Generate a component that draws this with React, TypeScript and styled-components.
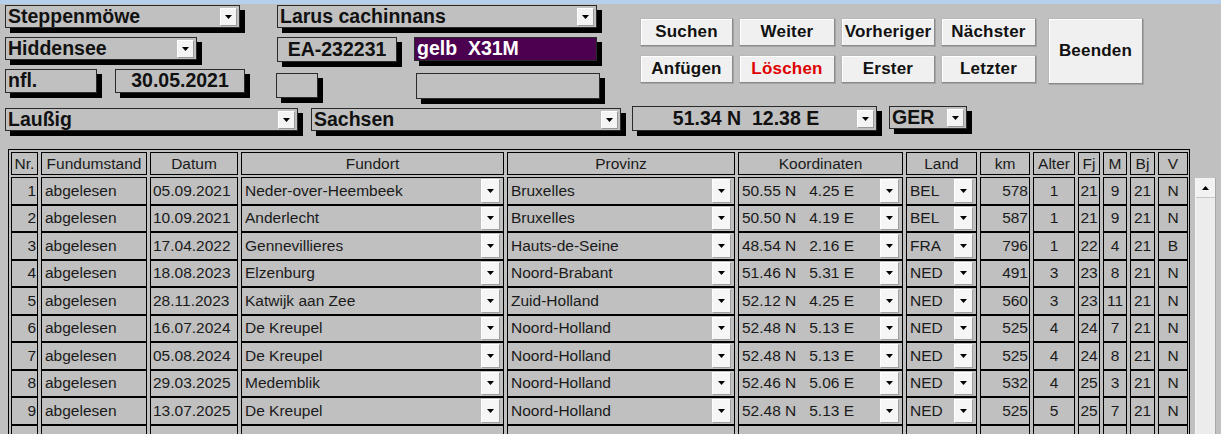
import React from "react";
import styled, { createGlobalStyle } from "styled-components";

const Global = createGlobalStyle`
  html, body { margin: 0; padding: 0; background: #c0c0c0; overflow: hidden; }
  body { font-family: "Liberation Sans", Arial, sans-serif; color: #111; }
  * { box-sizing: border-box; }
`;

const Window = styled.div`
  width: 1221px;
  height: 434px;
  background: #c0c0c0;
  overflow: hidden;
  display: flex;
  flex-direction: column;
`;

const TitleStrip = styled.div`
  flex: none;
  height: 4px;
  background: #b4d0ec;
`;

const Header = styled.div`
  display: flex;
  flex-direction: column;
  padding: 1px 0 0 5px;
`;

const TopSection = styled.div`
  display: flex;
  align-items: flex-start;
`;

const Column = styled.div<{ $w: number }>`
  width: ${(p) => p.$w}px;
  display: flex;
  flex-direction: column;
  align-items: flex-start;
`;

const FieldRow = styled.div<{ $gap: number; $mt?: number }>`
  display: flex;
  align-items: flex-start;
  gap: ${(p) => p.$gap}px;
  margin-top: ${(p) => p.$mt ?? 0}px;
`;

const Field = styled.div<{
  $w: number;
  $h?: number;
  $mt?: number;
  $ml?: number;
  $align?: "left" | "center";
  $purple?: boolean;
}>`
  flex: none;
  width: ${(p) => p.$w}px;
  height: ${(p) => p.$h ?? 23}px;
  margin-top: ${(p) => p.$mt ?? 0}px;
  margin-left: ${(p) => p.$ml ?? 0}px;
  border: 1px solid #2a2a2a;
  box-shadow: 5px 5px 0 #000;
  background: ${(p) => (p.$purple ? "#4b0050" : "#c0c0c0")};
  color: ${(p) => (p.$purple ? "#fff" : "#111")};
  font-size: 19.5px;
  font-weight: bold;
  display: flex;
  align-items: center;
  justify-content: ${(p) => (p.$align === "center" ? "center" : "space-between")};
  padding: 0 2px 0 2px;
  white-space: pre;
  overflow: hidden;
`;

const FieldText = styled.span`
  line-height: 1;
`;

const TopDrop = styled.div`
  flex: none;
  width: 17px;
  height: 18px;
  background: #f4f4f4;
  border-top: 1px solid #ffffff;
  border-left: 1px solid #ffffff;
  border-right: 1px solid #9a9a9a;
  border-bottom: 1px solid #9a9a9a;
  display: flex;
  align-items: center;
  justify-content: center;
`;

const ButtonArea = styled.div`
  display: flex;
  align-items: flex-start;
  margin: 13px 0 0 39px;
`;

const ButtonGrid = styled.div`
  display: grid;
  grid-template-columns: 93px 96px 94px 95px;
  grid-template-rows: 28px 28px;
  column-gap: 6px;
  row-gap: 9px;
`;

const Btn = styled.div<{ $danger?: boolean; $tall?: boolean }>`
  width: ${(p) => (p.$tall ? "95px" : "auto")};
  height: ${(p) => (p.$tall ? "66px" : "auto")};
  margin-left: ${(p) => (p.$tall ? "12px" : "0")};
  background: #f0f0f0;
  border: 1px solid #b9b9b9;
  border-right-color: #8c8c8c;
  border-bottom-color: #8c8c8c;
  box-shadow: inset 1px 1px 0 #ffffff, 1px 1px 0 #a4a4a4;
  display: flex;
  align-items: center;
  justify-content: center;
  font-size: 17px;
  font-weight: bold;
  color: ${(p) => (p.$danger ? "#e00000" : "#111")};
  white-space: nowrap;
  letter-spacing: 0.2px;
`;

const ComboRow = styled.div`
  display: flex;
  align-items: flex-start;
  margin-top: 9px;
`;

const TableArea = styled.div`
  display: flex;
  align-items: flex-start;
  padding-left: 8px;
  margin-top: 18px;
`;

const COLS = "27px 106px 88px 263px 228px 165px 71px 50px 42px 22px 24px 25px 30px";

const Table = styled.div`
  flex: none;
  width: 1182px;
  border: 1px solid #000;
  border-bottom: none;
  padding: 2px 1px 0 2px;
  display: flex;
  flex-direction: column;
  font-size: 15.5px;
`;

const HeadRow = styled.div`
  display: grid;
  grid-template-columns: ${COLS};
  column-gap: 3px;
  height: 23px;
  margin-bottom: 2px;
`;

const BodyRow = styled.div`
  display: grid;
  grid-template-columns: ${COLS};
  column-gap: 3px;
  height: 27.5px;
`;

const Cell = styled.div<{ $align?: "left" | "right" | "center"; $pl?: number }>`
  border: 1px solid #000;
  display: flex;
  align-items: center;
  justify-content: ${(p) =>
    p.$align === "right" ? "flex-end" : p.$align === "center" ? "center" : "flex-start"};
  padding: 0 ${(p) => (p.$align === "right" ? 1 : 0)}px 0 ${(p) => p.$pl ?? 0}px;
  white-space: pre;
  overflow: hidden;
  color: #1a1a1a;
`;

const HeadCell = styled(Cell)`
  justify-content: center;
  padding: 0;
`;

const CellText = styled.span`
  flex: 1;
  min-width: 0;
  overflow: hidden;
`;

const RowDrop = styled.div`
  flex: none;
  align-self: stretch;
  width: 19px;
  margin: 1px 3px 1px 0;
  background: #f6f6f6;
  border-top: 1px solid #ffffff;
  border-left: 1px solid #ffffff;
  border-right: 1px solid #a0a0a0;
  border-bottom: 1px solid #a0a0a0;
  display: flex;
  align-items: center;
  justify-content: center;
`;

const ScrollBar = styled.div`
  flex: none;
  width: 21px;
  height: 300px;
  margin: 29px 0 0 5px;
  background: #ececec;
  border-left: 1px solid #f6f6f6;
  border-right: 1px solid #a8a8a8;
  display: flex;
  flex-direction: column;
`;

const ScrollUp = styled.div`
  height: 20px;
  background: #f2f2f2;
  border-bottom: 1px solid #c8c8c8;
  display: flex;
  align-items: center;
  justify-content: center;
`;

const Arrow = ({ up }: { up?: boolean }) => (
  <svg width="7" height="4" viewBox="0 0 7 4">
    <polygon points={up ? "0,4 7,4 3.5,0" : "0,0 7,0 3.5,4"} fill="#000" />
  </svg>
);

type Row = {
  nr: number;
  stand: string;
  datum: string;
  ort: string;
  prov: string;
  koord: string;
  land: string;
  km: number;
  alter: number;
  fj: number;
  m: number;
  bj: number;
  v: string;
};

const rows: Row[] = [
  { nr: 1, stand: "abgelesen", datum: "05.09.2021", ort: "Neder-over-Heembeek", prov: "Bruxelles", koord: "50.55 N   4.25 E", land: "BEL", km: 578, alter: 1, fj: 21, m: 9, bj: 21, v: "N" },
  { nr: 2, stand: "abgelesen", datum: "10.09.2021", ort: "Anderlecht", prov: "Bruxelles", koord: "50.50 N   4.19 E", land: "BEL", km: 587, alter: 1, fj: 21, m: 9, bj: 21, v: "N" },
  { nr: 3, stand: "abgelesen", datum: "17.04.2022", ort: "Gennevillieres", prov: "Hauts-de-Seine", koord: "48.54 N   2.16 E", land: "FRA", km: 796, alter: 1, fj: 22, m: 4, bj: 21, v: "B" },
  { nr: 4, stand: "abgelesen", datum: "18.08.2023", ort: "Elzenburg", prov: "Noord-Brabant", koord: "51.46 N   5.31 E", land: "NED", km: 491, alter: 3, fj: 23, m: 8, bj: 21, v: "N" },
  { nr: 5, stand: "abgelesen", datum: "28.11.2023", ort: "Katwijk aan Zee", prov: "Zuid-Holland", koord: "52.12 N   4.25 E", land: "NED", km: 560, alter: 3, fj: 23, m: 11, bj: 21, v: "N" },
  { nr: 6, stand: "abgelesen", datum: "16.07.2024", ort: "De Kreupel", prov: "Noord-Holland", koord: "52.48 N   5.13 E", land: "NED", km: 525, alter: 4, fj: 24, m: 7, bj: 21, v: "N" },
  { nr: 7, stand: "abgelesen", datum: "05.08.2024", ort: "De Kreupel", prov: "Noord-Holland", koord: "52.48 N   5.13 E", land: "NED", km: 525, alter: 4, fj: 24, m: 8, bj: 21, v: "N" },
  { nr: 8, stand: "abgelesen", datum: "29.03.2025", ort: "Medemblik", prov: "Noord-Holland", koord: "52.46 N   5.06 E", land: "NED", km: 532, alter: 4, fj: 25, m: 3, bj: 21, v: "N" },
  { nr: 9, stand: "abgelesen", datum: "13.07.2025", ort: "De Kreupel", prov: "Noord-Holland", koord: "52.48 N   5.13 E", land: "NED", km: 525, alter: 5, fj: 25, m: 7, bj: 21, v: "N" },
];

const headers = ["Nr.", "Fundumstand", "Datum", "Fundort", "Provinz", "Koordinaten", "Land", "km", "Alter", "Fj", "M", "Bj", "V"];

const ComboCell = ({ text }: { text: string }) => (
  <Cell $pl={3}>
    <CellText>{text}</CellText>
    <RowDrop>
      <Arrow />
    </RowDrop>
  </Cell>
);

const DataRow = ({ r }: { r: Row }) => (
  <BodyRow>
    <Cell $align="right">{r.nr}</Cell>
    <Cell $pl={3}>{r.stand}</Cell>
    <Cell $pl={2}>{r.datum}</Cell>
    <ComboCell text={r.ort} />
    <ComboCell text={r.prov} />
    <ComboCell text={r.koord} />
    <ComboCell text={r.land} />
    <Cell $align="right">{r.km}</Cell>
    <Cell $align="center">{r.alter}</Cell>
    <Cell $align="center">{r.fj}</Cell>
    <Cell $align="center">{r.m}</Cell>
    <Cell $align="center">{r.bj}</Cell>
    <Cell $align="center">{r.v}</Cell>
  </BodyRow>
);

const EmptyRow = () => (
  <BodyRow>
    {headers.map((h) => (
      <Cell key={h} />
    ))}
  </BodyRow>
);

const TopCombo = ({ w, h, mt, ml, text, align }: { w: number; h?: number; mt?: number; ml?: number; text: string; align?: "left" | "center" }) => (
  <Field $w={w} $h={h} $mt={mt} $ml={ml}>
    <FieldText style={align === "center" ? { flex: 1, textAlign: "center" } : undefined}>{text}</FieldText>
    <TopDrop>
      <Arrow />
    </TopDrop>
  </Field>
);

export default function App() {
  return (
    <>
      <Global />
      <Window>
        <TitleStrip />
        <Header>
          <TopSection>
            <Column $w={272}>
              <TopCombo w={235} text="Steppenmöwe" />
              <TopCombo w={192} mt={9} text="Hiddensee" />
              <FieldRow $gap={18} $mt={9}>
                <Field $w={92} $h={24}>
                  <FieldText>nfl.</FieldText>
                </Field>
                <Field $w={130} $h={24} $align="center">
                  <FieldText>30.05.2021</FieldText>
                </Field>
              </FieldRow>
            </Column>
            <Column $w={324}>
              <TopCombo w={320} text="Larus cachinnans" />
              <FieldRow $gap={17} $mt={9}>
                <Field $w={120} $h={25} $align="center">
                  <FieldText>EA-232231</FieldText>
                </Field>
                <Field $w={183} $h={24} $purple>
                  <FieldText>gelb  X31M</FieldText>
                </Field>
              </FieldRow>
              <FieldRow $gap={98} $mt={11}>
                <Field $w={42} $h={25} $ml={-1} />
                <Field $w={184} $h={26} />
              </FieldRow>
            </Column>
            <ButtonArea>
              <ButtonGrid>
                <Btn>Suchen</Btn>
                <Btn>Weiter</Btn>
                <Btn>Vorheriger</Btn>
                <Btn>Nächster</Btn>
                <Btn>Anfügen</Btn>
                <Btn $danger>Löschen</Btn>
                <Btn>Erster</Btn>
                <Btn>Letzter</Btn>
              </ButtonGrid>
              <Btn $tall>Beenden</Btn>
            </ButtonArea>
          </TopSection>
          <ComboRow>
            <TopCombo w={293} text="Laußig" />
            <TopCombo w={310} ml={13} text="Sachsen" />
            <TopCombo w={245} h={25} mt={-2} ml={11} text="51.34 N  12.38 E" align="center" />
            <TopCombo w={78} mt={-2} ml={12} text="GER" />
          </ComboRow>
        </Header>
        <TableArea>
          <Table>
            <HeadRow>
              {headers.map((h) => (
                <HeadCell key={h}>{h}</HeadCell>
              ))}
            </HeadRow>
            {rows.map((r) => (
              <DataRow key={r.nr} r={r} />
            ))}
            <EmptyRow />
          </Table>
          <ScrollBar>
            <ScrollUp>
              <Arrow up />
            </ScrollUp>
          </ScrollBar>
        </TableArea>
      </Window>
    </>
  );
}
